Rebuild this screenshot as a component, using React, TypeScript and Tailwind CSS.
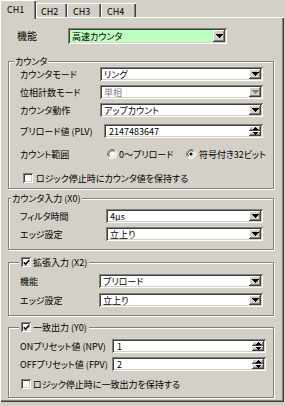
import React from "react";

const SUNKEN =
  "shadow-[inset_1px_1px_0_#808080,inset_-1px_-1px_0_#ffffff,inset_2px_2px_0_#404040,inset_-2px_-2px_0_#d4d0c8]";
const RAISED =
  "shadow-[inset_-1px_-1px_0_#404040,inset_1px_1px_0_#ffffff,inset_-2px_-2px_0_#808080]";
const TAB =
  "shadow-[inset_1px_1px_0_#ffffff,inset_-1px_0_0_#404040,inset_-2px_0_0_#808080]";
const PANEL =
  "shadow-[inset_1px_1px_0_#ffffff,inset_-1px_-1px_0_#404040,inset_-2px_-2px_0_#808080]";

function Arrow({ gray }: { gray?: boolean }) {
  return (
    <svg width="7" height="4" viewBox="0 0 7 4" shapeRendering="crispEdges">
      <path d="M0 0h7v1h-1v1h-1v1h-1v1h-1v-1h-1v-1h-1v-1h-1z" fill={gray ? "#808080" : "#000"} />
    </svg>
  );
}

function Combo({ cls, value, disabled, green }: { cls: string; value: string; disabled?: boolean; green?: boolean }) {
  return (
    <div className={`${cls} shrink-0 flex items-stretch p-[2px] ${green ? "bg-[#bfffbf]" : "bg-white"} ${SUNKEN}`}>
      <div className={`flex-1 flex items-center pl-[2px] whitespace-nowrap overflow-hidden ${disabled ? "text-[#808080]" : ""}`}>
        {value}
      </div>
      <div className={`w-[12px] flex items-center justify-center bg-[#d4d0c8] ${RAISED}`}>
        <Arrow gray={disabled} />
      </div>
    </div>
  );
}

function Spin({ cls, value }: { cls: string; value: string }) {
  return (
    <div className={`${cls} shrink-0 flex items-stretch p-[2px] bg-white ${SUNKEN}`}>
      <div className="flex-1 flex items-center pl-[3px] whitespace-nowrap overflow-hidden">{value}</div>
      <div className="w-[12px] flex flex-col">
        <div className={`flex-1 flex items-center justify-center bg-[#d4d0c8] ${RAISED}`}>
          <svg width="5" height="3" viewBox="0 0 5 3" shapeRendering="crispEdges">
            <path d="M2 0h1v1h1v1h1v1h-5v-1h1v-1h1z" fill="#000" />
          </svg>
        </div>
        <div className={`flex-1 flex items-center justify-center bg-[#d4d0c8] ${RAISED}`}>
          <svg width="5" height="3" viewBox="0 0 5 3" shapeRendering="crispEdges">
            <path d="M0 0h5v1h-1v1h-1v1h-1v-1h-1v-1h-1z" fill="#000" />
          </svg>
        </div>
      </div>
    </div>
  );
}

function Check({ checked }: { checked?: boolean }) {
  return (
    <div className={`w-[10px] h-[10px] shrink-0 bg-white flex items-center justify-center ${SUNKEN}`}>
      {checked && (
        <svg width="7" height="7" viewBox="0 0 7 7">
          <path d="M0.8 3.2 L2.6 5.2 L6.2 1.2" stroke="#000" strokeWidth="1.6" fill="none" />
        </svg>
      )}
    </div>
  );
}

function Radio({ checked }: { checked?: boolean }) {
  return (
    <svg width="10" height="10" viewBox="0 0 10 10" className="shrink-0">
      <circle cx="5" cy="5" r="4.5" fill="#fff" />
      <path d="M1.82 8.18 A4.5 4.5 0 0 1 8.18 1.82" stroke="#808080" strokeWidth="1" fill="none" />
      <path d="M8.18 1.82 A4.5 4.5 0 0 1 1.82 8.18" stroke="#ffffff" strokeWidth="1" fill="none" />
      <path d="M2.53 7.47 A3.5 3.5 0 0 1 7.47 2.53" stroke="#404040" strokeWidth="1" fill="none" />
      <path d="M7.47 2.53 A3.5 3.5 0 0 1 2.53 7.47" stroke="#d4d0c8" strokeWidth="1" fill="none" />
      {checked && <circle cx="5" cy="5" r="1.6" fill="#000" />}
    </svg>
  );
}

function Group({ cls, labelCls, label, children }: { cls: string; labelCls: string; label: React.ReactNode; children: React.ReactNode }) {
  return (
    <div
      className={`relative ml-[8px] w-[266px] shrink-0 flex flex-col border border-[#808080] shadow-[1px_1px_0_#ffffff,inset_1px_1px_0_#ffffff] ${cls}`}
    >
      <div className={`absolute top-[-7px] h-[12px] flex items-center bg-[#d4d0c8] whitespace-nowrap ${labelCls}`}>
        {label}
      </div>
      {children}
    </div>
  );
}

function Row({ cls, label, labelW, children }: { cls: string; label: string; labelW: string; children: React.ReactNode }) {
  return (
    <div className={`flex items-center h-[14px] pl-[11px] ${cls}`}>
      <span className={`${labelW} shrink-0 whitespace-nowrap`}>{label}</span>
      {children}
    </div>
  );
}

export default function App() {
  return (
    <div className="w-[285px] h-[406px] bg-[#d4d0c8] text-[9px] leading-none text-black font-['Noto_Sans_CJK_JP',sans-serif] [font-feature-settings:'palt'] overflow-hidden select-none">
      {/* tabs */}
      <div className="relative z-10 flex items-end h-[17px]">
        <div className={`w-[36px] h-[19px] -mb-[2px] bg-[#d4d0c8] pl-[7px] pt-[5px] ${TAB}`}>CH1</div>
        <div className={`w-[31px] h-[14px] pl-[5px] pt-[4px] ${TAB}`}>CH2</div>
        <div className={`w-[34px] h-[14px] pl-[6px] pt-[4px] ${TAB}`}>CH3</div>
        <div className={`w-[35px] h-[14px] pl-[6px] pt-[4px] ${TAB}`}>CH4</div>
      </div>

      {/* panel */}
      <div className={`w-[284px] h-[385px] flex flex-col ${PANEL}`}>
        <div className="h-[16px] mt-[11px] flex items-center pl-[17px]">
          <span className="w-[51px] shrink-0 text-[10px]">機能</span>
          <Combo cls="w-[159px] h-[16px]" value="高速カウンタ" green />
        </div>

        {/* カウンタ */}
        <Group cls="mt-[17px] h-[128px]" labelCls="left-[5px] px-[1px]" label={<span>カウンタ</span>}>
          <Row cls="mt-[5px]" label="カウンタモード" labelW="w-[80px]">
            <Combo cls="w-[163px] h-[14px]" value="リング" />
          </Row>
          <Row cls="mt-[4px]" label="位相計数モード" labelW="w-[80px]">
            <Combo cls="w-[163px] h-[14px]" value="単相" disabled />
          </Row>
          <Row cls="mt-[4px]" label="カウンタ動作" labelW="w-[80px]">
            <Combo cls="w-[163px] h-[14px]" value="アップカウント" />
          </Row>
          <Row cls="mt-[7px]" label="プリロード値 (PLV)" labelW="w-[84px]">
            <Spin cls="w-[159px] h-[14px]" value="2147483647" />
          </Row>
          <div className="flex items-center h-[12px] mt-[10px] pl-[11px]">
            <span className="w-[87px] shrink-0">カウント範囲</span>
            <div className="w-[79px] shrink-0 flex items-center">
              <Radio />
              <span className="ml-[2px] whitespace-nowrap">0〜プリロード</span>
            </div>
            <div className="flex items-center">
              <Radio checked />
              <span className="ml-[3px] whitespace-nowrap">符号付き32ビット</span>
            </div>
          </div>
          <div className="flex items-center h-[12px] mt-[12px] pl-[14px]">
            <Check />
            <span className="ml-[3px] whitespace-nowrap">ロジック停止時にカウンタ値を保持する</span>
          </div>
        </Group>

        {/* カウンタ入力 */}
        <Group cls="mt-[9px] h-[52px]" labelCls="left-[2px] px-[1px]" label={<span>カウンタ入力 (X0)</span>}>
          <Row cls="mt-[10px]" label="フィルタ時間" labelW="w-[86px]">
            <Combo cls="w-[157px] h-[14px]" value="4μs" />
          </Row>
          <Row cls="mt-[4px]" label="エッジ設定" labelW="w-[86px]">
            <Combo cls="w-[157px] h-[14px]" value="立上り" />
          </Row>
        </Group>

        {/* 拡張入力 */}
        <Group
          cls="mt-[12px] h-[54px]"
          labelCls="left-[10px] px-[2px]"
          label={
            <>
              <Check checked />
              <span className="ml-[2px]">拡張入力 (X2)</span>
            </>
          }
        >
          <Row cls="mt-[11px]" label="機能" labelW="w-[79px]">
            <Combo cls="w-[164px] h-[14px]" value="プリロード" />
          </Row>
          <Row cls="mt-[5px]" label="エッジ設定" labelW="w-[79px]">
            <Combo cls="w-[164px] h-[14px]" value="立上り" />
          </Row>
        </Group>

        {/* 一致出力 */}
        <Group
          cls="mt-[11px] h-[71px]"
          labelCls="left-[10px] px-[2px]"
          label={
            <>
              <Check checked />
              <span className="ml-[2px]">一致出力 (Y0)</span>
            </>
          }
        >
          <Row cls="mt-[11px]" label="ONプリセット値 (NPV)" labelW="w-[92px]">
            <Spin cls="w-[154px] h-[14px]" value="1" />
          </Row>
          <Row cls="mt-[4px]" label="OFFプリセット値 (FPV)" labelW="w-[92px]">
            <Spin cls="w-[154px] h-[14px]" value="2" />
          </Row>
          <div className="flex items-center h-[12px] mt-[7px] pl-[12px]">
            <Check />
            <span className="ml-[2px] whitespace-nowrap">ロジック停止時に一致出力を保持する</span>
          </div>
        </Group>
      </div>
    </div>
  );
}
